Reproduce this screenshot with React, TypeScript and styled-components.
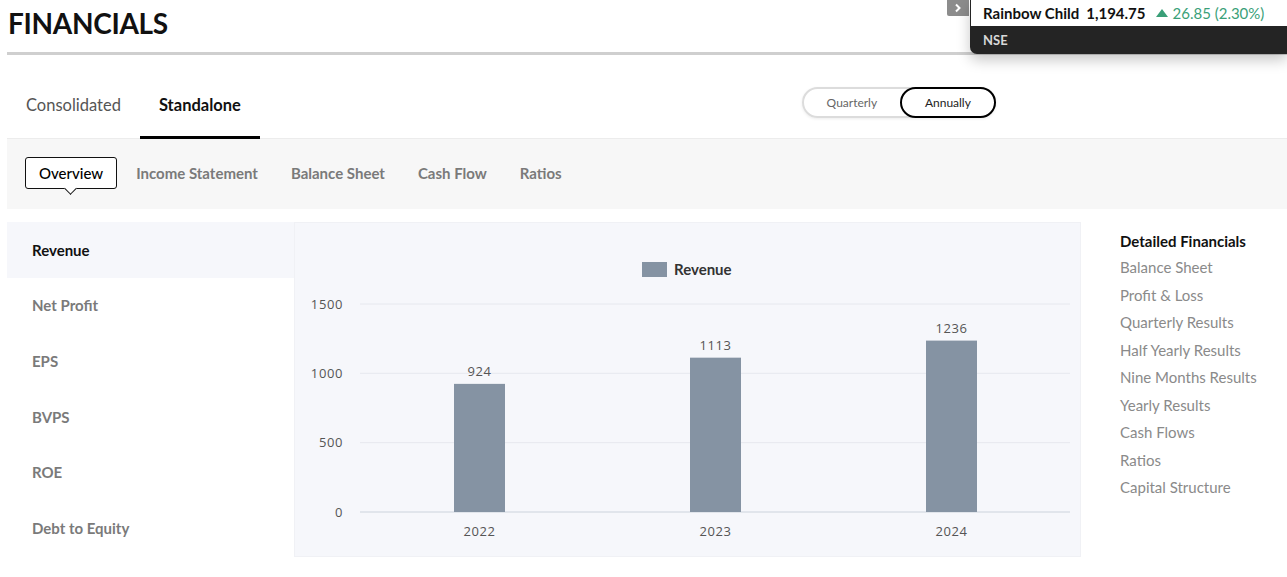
import React from "react";
import styled, { createGlobalStyle } from "styled-components";

const Global = createGlobalStyle`
  html, body { margin: 0; padding: 0; background: #fff; overflow: hidden; }
  body { font-family: Lato, "Open Sans", sans-serif; color: #111; }
  * { box-sizing: border-box; }
`;

const Page = styled.div`
  width: 1287px;
  padding-left: 7px;
  position: relative;
`;

const Header = styled.div`
  height: 55px;
  border-bottom: 3px solid #cfcfcf;
  padding-top: 5px;
`;

const Title = styled.h1`
  margin: 0;
  font-family: Lato, sans-serif;
  font-weight: 700;
  font-size: 28px;
  line-height: 36px;
  letter-spacing: -0.3px;
  padding-left: 1px;
`;

const TabsRow = styled.div`
  display: flex;
  align-items: center;
  height: 84px;
  border-bottom: 1px solid #ececec;
`;

const Tab = styled.div<{ $active?: boolean }>`
  height: 100%;
  display: flex;
  align-items: center;
  padding: 18px 19px 0;
  font-size: 16.5px;
  color: ${(p) => (p.$active ? "#111" : "#555")};
  font-weight: ${(p) => (p.$active ? 700 : 400)};
  border-bottom: 3px solid ${(p) => (p.$active ? "#000" : "transparent")};
  margin-bottom: -1px;
`;

const Toggle = styled.div`
  margin-left: 542px;
  margin-top: 12px;
  display: flex;
  height: 31px;
  width: 194px;
  border: 2px solid #dcdcdc;
  border-radius: 16px;
  box-shadow: 0 1px 3px rgba(0, 0, 0, 0.08);
`;

const ToggleOpt = styled.div<{ $active?: boolean }>`
  flex: 1;
  display: flex;
  align-items: center;
  justify-content: center;
  font-size: 12px;
  color: ${(p) => (p.$active ? "#222" : "#666")};
  border: 2px solid ${(p) => (p.$active ? "#000" : "transparent")};
  border-radius: 16px;
  margin: ${(p) => (p.$active ? "-2px -2px -2px 0" : "0")};
`;

const SubBar = styled.div`
  height: 70px;
  background: #f7f7f7;
  display: flex;
  align-items: center;
  gap: 5px;
  padding: 0 0 2px 18px;
  white-space: nowrap;
`;

const SubTab = styled.div<{ $active?: boolean }>`
  position: relative;
  height: 32px;
  display: flex;
  align-items: center;
  padding: 0 13px;
  font-size: 15px;
  font-weight: ${(p) => (p.$active ? 500 : 700)};
  color: ${(p) => (p.$active ? "#000" : "#7a7a7a")};
  border: 1px solid ${(p) => (p.$active ? "#111" : "transparent")};
  border-radius: 3px;
  background: ${(p) => (p.$active ? "#fff" : "transparent")};
`;

const Caret = styled.span`
  position: absolute;
  left: 50%;
  bottom: -5px;
  width: 9px;
  height: 9px;
  margin-left: -5px;
  background: #fff;
  border-right: 1px solid #111;
  border-bottom: 1px solid #111;
  transform: rotate(45deg);
`;

const Unit = styled.span`
  margin-left: 708px;
  font-size: 15px;
  color: #555;
`;

const Main = styled.div`
  display: flex;
  margin-top: 13px;
  align-items: flex-start;
`;

const Menu = styled.div`
  width: 287px;
  display: flex;
  flex-direction: column;
`;

const MenuItem = styled.div<{ $active?: boolean }>`
  height: 55.6px;
  display: flex;
  align-items: center;
  padding-left: 25px;
  font-size: 15px;
  font-weight: 700;
  color: ${(p) => (p.$active ? "#111" : "#7a7a7a")};
  background: ${(p) => (p.$active ? "#f6f7fb" : "#fff")};
`;

const ChartPanel = styled.div`
  width: 787px;
  height: 335px;
  background: #f6f7fb;
  border: 1px solid #f0f1f5;
`;

const Sidebar = styled.div`
  margin-left: 39px;
  padding-top: 8px;
  display: flex;
  flex-direction: column;
`;

const SideTitle = styled.div`
  font-size: 15px;
  font-weight: 700;
  color: #111;
  line-height: 22px;
  margin-bottom: 2px;
`;

const SideLink = styled.div`
  font-size: 15px;
  color: #8a8a8a;
  line-height: 27.5px;
  white-space: nowrap;
`;

const Ticker = styled.div`
  position: absolute;
  top: 0;
  right: 0;
  width: 317px;
  height: 54px;
  background: #242424;
  border-bottom-left-radius: 7px;
  box-shadow: 0 6px 14px rgba(0, 0, 0, 0.22);
  padding-left: 1px;
`;

const TickerTop = styled.div`
  height: 26px;
  background: #fff;
  display: flex;
  align-items: center;
  padding-left: 12px;
  gap: 7px;
  font-size: 15px;
  white-space: nowrap;
`;

const Strong = styled.span`
  font-weight: 700;
  color: #111;
`;

const Change = styled.span`
  color: #3a9f78;
  margin-left: 3px;
  display: flex;
  align-items: center;
  gap: 5px;
`;

const TickerBottom = styled.div`
  height: 28px;
  display: flex;
  align-items: center;
  padding-left: 12px;
  font-size: 13px;
  font-weight: 700;
  color: #d8d8d8;
`;

const ArrowTab = styled.div`
  position: absolute;
  top: 0;
  right: 318px;
  width: 22px;
  height: 16px;
  background: #8c8c8c;
  border-bottom-left-radius: 2px;
  display: flex;
  align-items: center;
  justify-content: center;
`;

const data = [
  { year: "2022", value: 924 },
  { year: "2023", value: 1113 },
  { year: "2024", value: 1236 },
];

const RevenueChart: React.FC = () => {
  const base = 290;
  const scale = 208 / 1500;
  const ticks = [1500, 1000, 500, 0];
  const barX = [160, 396, 632];
  return (
    <svg width="785" height="333" viewBox="1 1 785 333">
      <rect x="348" y="40" width="25" height="15" fill="#8593a3" />
      <text x="380" y="53" fontFamily="Lato, sans-serif" fontWeight="700" fontSize="15" fill="#333">
        Revenue
      </text>
      {ticks.map((t) => {
        const y = base - t * scale;
        return (
          <g key={t}>
            <line x1="66" x2="776" y1={y} y2={y} stroke={t === 0 ? "#ccd3dc" : "#e6e8ee"} strokeWidth="1" />
            <text x="49" y={y + 4.5} textAnchor="end" fontFamily="'Open Sans', sans-serif" fontSize="13" fill="#555" letterSpacing="0.6">
              {t}
            </text>
          </g>
        );
      })}
      {data.map((d, i) => {
        const top = base - d.value * scale;
        const cx = barX[i] + 25.5;
        return (
          <g key={d.year}>
            <rect x={barX[i]} y={top} width="51" height={base - top} fill="#8593a3" />
            <text x={cx} y={top - 8} textAnchor="middle" fontFamily="'Open Sans', sans-serif" fontSize="13" fill="#555" letterSpacing="0.6">
              {d.value}
            </text>
            <text x={cx} y={314} textAnchor="middle" fontFamily="'Open Sans', sans-serif" fontSize="13" fill="#555" letterSpacing="0.6">
              {d.year}
            </text>
          </g>
        );
      })}
    </svg>
  );
};

export default function App() {
  const links = [
    "Balance Sheet",
    "Profit & Loss",
    "Quarterly Results",
    "Half Yearly Results",
    "Nine Months Results",
    "Yearly Results",
    "Cash Flows",
    "Ratios",
    "Capital Structure",
  ];
  const metrics = ["Revenue", "Net Profit", "EPS", "BVPS", "ROE", "Debt to Equity"];
  return (
    <>
      <Global />
      <Page>
        <Header>
          <Title>FINANCIALS</Title>
        </Header>
        <TabsRow>
          <Tab>Consolidated</Tab>
          <Tab $active>Standalone</Tab>
          <Toggle>
            <ToggleOpt>Quarterly</ToggleOpt>
            <ToggleOpt $active>Annually</ToggleOpt>
          </Toggle>
        </TabsRow>
        <SubBar>
          <SubTab $active>
            Overview
            <Caret />
          </SubTab>
          <SubTab>Income Statement</SubTab>
          <SubTab>Balance Sheet</SubTab>
          <SubTab>Cash Flow</SubTab>
          <SubTab>Ratios</SubTab>
          <Unit>(Rs Cr)</Unit>
        </SubBar>
        <Main>
          <Menu>
            {metrics.map((m, i) => (
              <MenuItem key={m} $active={i === 0}>
                {m}
              </MenuItem>
            ))}
          </Menu>
          <ChartPanel>
            <RevenueChart />
          </ChartPanel>
          <Sidebar>
            <SideTitle>Detailed Financials</SideTitle>
            {links.map((l) => (
              <SideLink key={l}>{l}</SideLink>
            ))}
          </Sidebar>
        </Main>
        <ArrowTab>
          <svg width="8" height="10" viewBox="0 0 8 10">
            <path d="M2 1.5 L5.5 5 L2 8.5" stroke="#fff" strokeWidth="2" fill="none" />
          </svg>
        </ArrowTab>
        <Ticker>
          <TickerTop>
            <Strong>Rainbow Child</Strong>
            <Strong>1,194.75</Strong>
            <Change>
              <svg width="12" height="8" viewBox="0 0 12 8">
                <path d="M0 8 L6 0 L12 8 Z" fill="#3a9f78" />
              </svg>
              26.85 (2.30%)
            </Change>
          </TickerTop>
          <TickerBottom>NSE</TickerBottom>
        </Ticker>
      </Page>
    </>
  );
}
